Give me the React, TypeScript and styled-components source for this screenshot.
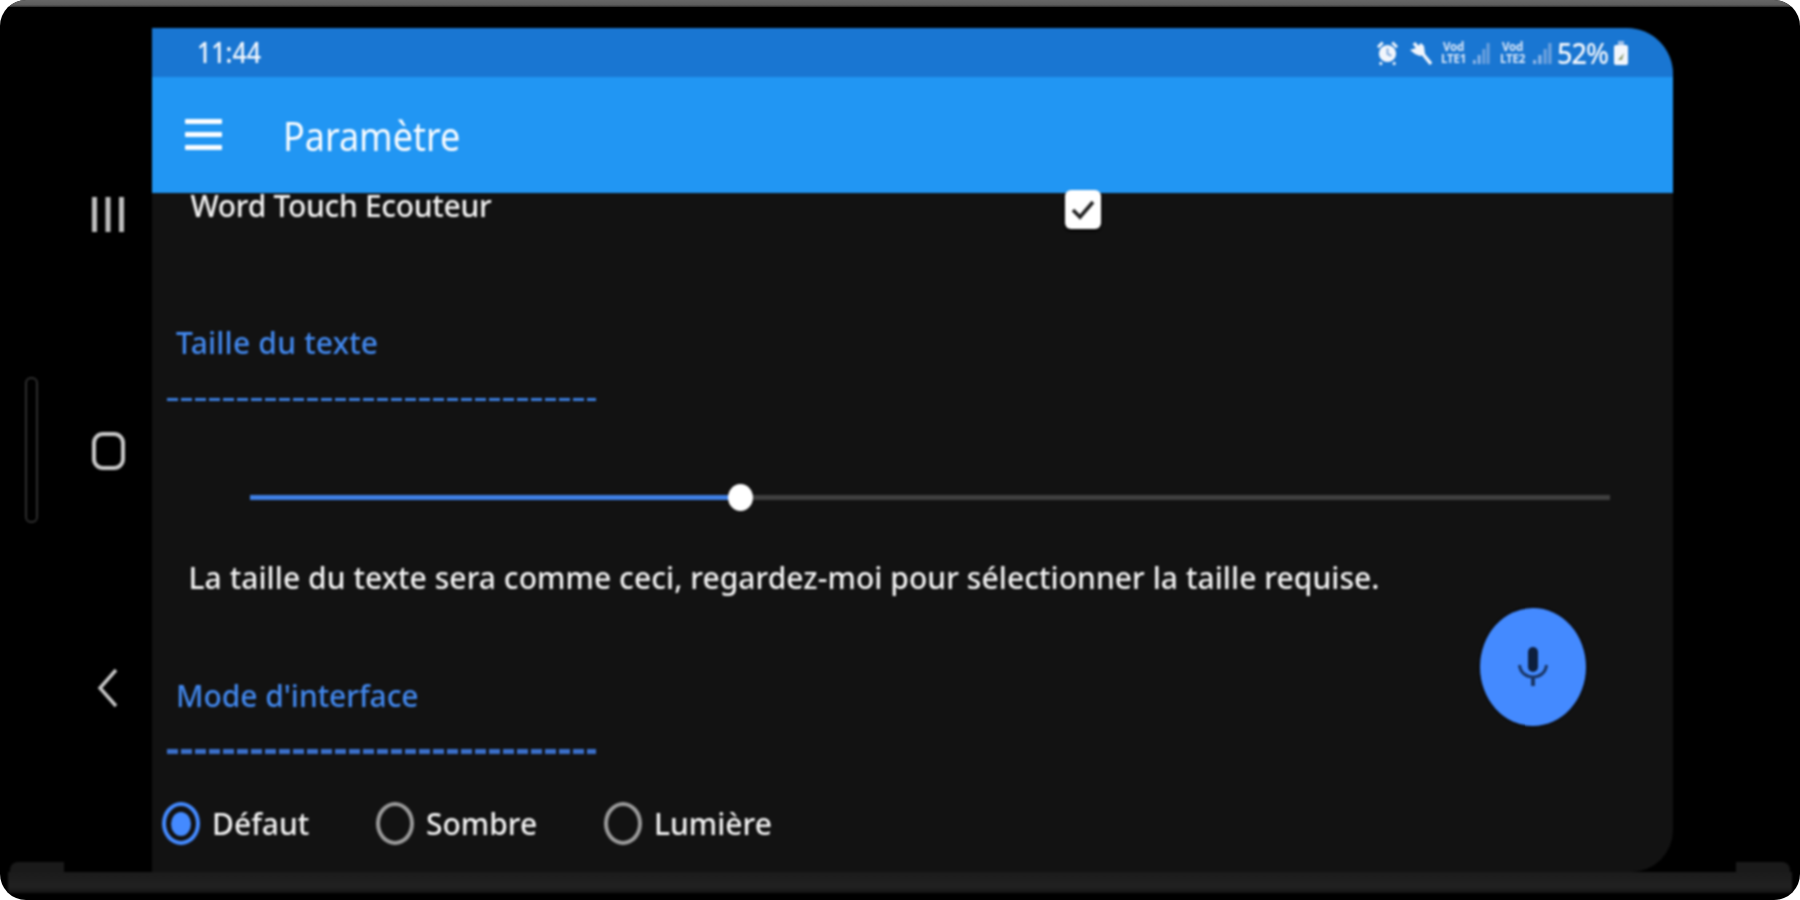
import React from "react";
import styled, { createGlobalStyle } from "styled-components";

const Global = createGlobalStyle`
  html, body { margin: 0; padding: 0; background: #fff; }
  body { width: 1800px; height: 900px; overflow: hidden; font-family: "Noto Sans", "Open Sans", sans-serif; }
`;

const Phone = styled.div`
  position: relative;
  width: 1800px;
  height: 900px;
  background: #000;
  border-radius: 26px;
  overflow: hidden;
  display: flex;
  flex-direction: column;
`;

const Inner = styled.div`
  flex: none;
  display: flex;
  flex-direction: column;
  height: 893px;
  filter: blur(0.8px);
`;

const TopEdge = styled.div`
  height: 7px;
  flex: none;
  background: linear-gradient(180deg, #666 0, #5c5c5c 70%, #2a2a2a 100%);
`;

const Main = styled.div`
  display: flex;
  height: 865px;
  flex: none;
  padding-top: 21px;
  box-sizing: border-box;
`;

const Rail = styled.nav`
  width: 151.5px;
  flex: none;
  box-sizing: border-box;
  padding: 169px 0 0 92px;
  display: flex;
  flex-direction: column;
  color: #bdbdbd;
`;

const RecentIcon = styled.svg`
  display: block;
  width: 32px;
  height: 35px;
`;

const HomeIcon = styled.div`
  width: 33px;
  height: 38px;
  margin-top: 200px;
  box-sizing: border-box;
  border: 4px solid #c8c8c8;
  border-radius: 11px;
`;

const BackIcon = styled.svg`
  display: block;
  width: 22px;
  height: 40px;
  margin: 198px 0 0 5px;
`;

const SideKey = styled.div`
  position: absolute;
  left: 25px;
  top: 370px;
  width: 13px;
  height: 146px;
  box-sizing: border-box;
  border: 2px solid #2e2e2e;
  border-radius: 6px;
`;

const Screen = styled.div`
  position: relative;
  width: 1521.5px;
  height: 844px;
  flex: none;
  background: #121212;
  border-radius: 0 46px 42px 0;
  overflow: hidden;
  display: flex;
  flex-direction: column;
`;

const StatusBar = styled.div`
  height: 49px;
  flex: none;
  background: #1976d2;
  display: flex;
  align-items: center;
  justify-content: space-between;
  padding: 0 44px 0 45.5px;
  color: #f4f8fd;
`;

const Clock = styled.span`
  display: inline-block;
  font-size: 25px;
  font-weight: 500;
  line-height: 30px;
  letter-spacing: 0;
  transform: translateY(-1px) scaleY(1.14);
`;

const StatusIcons = styled.div`
  display: flex;
  align-items: center;
`;

const Glyph = styled.svg<{ $w: number; $gap: number }>`
  display: block;
  width: ${(p) => p.$w}px;
  height: 26px;
  margin-left: ${(p) => p.$gap}px;
  flex: none;
`;

const Carrier = styled.div<{ $gap: number; $w: number }>`
  width: ${(p) => p.$w}px;
  margin-left: ${(p) => p.$gap}px;
  display: flex;
  flex-direction: column;
  align-items: center;
  color: #dbe7f8;
  font-weight: 700;
  line-height: 12px;
  font-size: 11.5px;
  letter-spacing: -0.2px;
  flex: none;
`;

const Battery = styled.span`
  display: inline-block;
  width: 53px;
  margin-left: 5px;
  font-size: 27px;
  font-weight: 500;
  line-height: 30px;
  letter-spacing: -0.9px;
  white-space: nowrap;
  transform: scaleY(1.08);
`;

const Toolbar = styled.header`
  height: 116px;
  flex: none;
  background: #2196f3;
  display: flex;
  align-items: center;
  padding-left: 33.5px;
  color: #fafdff;
`;

const MenuIcon = styled.div`
  width: 37px;
  height: 31px;
  flex: none;
  margin-top: -1px;
  display: flex;
  flex-direction: column;
  justify-content: space-between;
`;

const MenuBar = styled.span`
  display: block;
  height: 5px;
  background: #fafdff;
  border-radius: 1px;
`;

const Title = styled.h1`
  margin: 4px 0 0 61px;
  font-size: 36px;
  line-height: 40px;
  font-weight: 400;
  letter-spacing: -0.05px;
  transform: scaleY(1.1);
  transform-origin: left center;
`;

const Body = styled.main`
  display: flex;
  flex-direction: column;
  flex: 1;
`;

const WordRow = styled.div`
  height: 39px;
  margin-top: -3px;
  padding-left: 39px;
  display: flex;
  align-items: flex-start;
  position: relative;
`;

const WordLabel = styled.span`
  width: 874.5px;
  flex: none;
  margin-top: -2px;
  font-size: 30px;
  font-weight: 500;
  line-height: 36px;
  color: #f3f3f3;
  letter-spacing: -0.3px;
  white-space: nowrap;
`;

const Check = styled.div`
  width: 36px;
  height: 39px;
  flex: none;
  background: #fff;
  border-radius: 6px;
  display: flex;
  align-items: center;
  justify-content: center;
  box-shadow: 0 2px 3px #000;
`;

const SectionTitle = styled.h2<{ $top: number; $spacing: number }>`
  margin: ${(p) => p.$top}px 0 0 24.5px;
  font-size: 30px;
  line-height: 36px;
  font-weight: 500;
  color: #4288ee;
  letter-spacing: ${(p) => p.$spacing}px;
  white-space: nowrap;
`;

const DashRule = styled.div<{ $thick: number; $top: number; $color: string }>`
  margin: ${(p) => p.$top}px 0 0 15.5px;
  width: 429px;
  height: ${(p) => p.$thick}px;
  background: repeating-linear-gradient(90deg, ${(p) => p.$color} 0 11px, transparent 11px 14px);
`;

const SliderTrack = styled.div`
  position: relative;
  margin: 94px 0 0 98.5px;
  width: 1360px;
  height: 5px;
  background: #3f3f3f;
`;

const SliderFill = styled.div`
  height: 100%;
  background: #3f7fe4;
`;

const SliderThumb = styled.div`
  position: absolute;
  top: 50%;
  width: 25px;
  height: 27px;
  margin: -13.5px 0 0 -12.5px;
  background: #fff;
  border-radius: 50%;
`;

const Paragraph = styled.p`
  margin: 60px 0 0 37px;
  font-size: 30px;
  font-weight: 500;
  line-height: 36px;
  color: #f3f3f3;
  letter-spacing: 0.06px;
  white-space: nowrap;
`;

const RadioRow = styled.div`
  display: flex;
  align-items: center;
  margin: 48px 0 0 10.5px;
`;

const RadioItem = styled.label<{ $width: number }>`
  width: ${(p) => p.$width}px;
  flex: none;
  display: flex;
  align-items: center;
`;

const RadioDot = styled.span<{ $on?: boolean }>`
  display: flex;
  align-items: center;
  justify-content: center;
  box-sizing: border-box;
  width: 38px;
  height: 43px;
  flex: none;
  border-radius: 50%;
  border: 4px solid ${(p) => (p.$on ? "#448aff" : "#9a9a9a")};
  &::after {
    content: "";
    display: ${(p) => (p.$on ? "block" : "none")};
    width: 20px;
    height: 24px;
    border-radius: 50%;
    background: #448aff;
  }
`;

const RadioText = styled.span`
  margin-left: 12px;
  font-size: 30px;
  font-weight: 500;
  line-height: 36px;
  color: #f3f3f3;
  letter-spacing: 0;
  white-space: nowrap;
`;

const Fab = styled.button`
  position: absolute;
  right: 87px;
  bottom: 146px;
  width: 106px;
  height: 118px;
  padding: 0;
  border: none;
  border-radius: 50%;
  background: #448aff;
  box-shadow: 0 0 3px #000;
  display: flex;
  align-items: center;
  justify-content: center;
`;

const MicIcon = styled.svg`
  display: block;
  width: 30px;
  height: 40px;
`;

const Gutter = styled.div`
  flex: 1;
`;

const Bottom = styled.footer`
  position: relative;
  flex: none;
  height: 21px;
  margin: 0 8px;
  background: linear-gradient(180deg, #1b1b1b 0, #212121 70%, #141414 100%);
  &::before,
  &::after {
    content: "";
    position: absolute;
    bottom: 100%;
    width: 54px;
    height: 10px;
    background: #1a1a1a;
  }
  &::before {
    left: 2px;
    border-radius: 8px 0 0 0;
  }
  &::after {
    right: 2px;
    border-radius: 0 8px 0 0;
  }
`;

const Signal = ({ gap, w }: { gap: number; w: number }) => (
  <Glyph $w={w} $gap={gap} viewBox="0 0 19 26" preserveAspectRatio="none" aria-hidden="true">
    <rect x="1" y="20" width="3" height="4" fill="#8fb6e6" />
    <rect x="6" y="15" width="3" height="9" fill="#8fb6e6" />
    <rect x="11" y="9" width="3" height="15" fill="#6fa2dd" />
    <rect x="15.5" y="3" width="3" height="21" fill="#6fa2dd" />
  </Glyph>
);

export default function App() {
  return (
    <>
      <Global />
      <Phone>
        <TopEdge />
        <Inner>
          <SideKey />
          <Main>
            <Rail>
              <RecentIcon viewBox="0 0 32 35" aria-hidden="true">
                <rect x="0" y="0" width="5" height="35" fill="#bdbdbd" />
                <rect x="13.5" y="0" width="5" height="35" fill="#bdbdbd" />
                <rect x="27" y="0" width="5" height="35" fill="#bdbdbd" />
              </RecentIcon>
              <HomeIcon />
              <BackIcon viewBox="0 0 22 40" aria-hidden="true">
                <path d="M19 2 L3 20 L19 38" fill="none" stroke="#c8c8c8" strokeWidth="3.4" />
              </BackIcon>
            </Rail>
            <Screen>
              <StatusBar>
                <Clock>11:44</Clock>
                <StatusIcons>
                  <Glyph $w={21} $gap={0} viewBox="0 0 22 26" aria-hidden="true">
                    <circle cx="11" cy="13.5" r="9" fill="#f2f6fc" />
                    <path d="M1 7 L6 2 M21 7 L16 2 M5 23 L3 25 M17 23 L19 25" stroke="#f2f6fc" strokeWidth="3" />
                    <path d="M11 8 V14 L15 16" fill="none" stroke="#7fa9dc" strokeWidth="2" />
                  </Glyph>
                  <Glyph $w={24} $gap={10} viewBox="0 0 24 26" aria-hidden="true">
                    <path d="M2 10 L8 8 L13 3 L16 6 L17 14 L12 16 L7 14 Z" fill="#f2f6fc" />
                    <path d="M6 3 L23 24" stroke="#f2f6fc" strokeWidth="3.5" />
                  </Glyph>
                  <Carrier $gap={8} $w={27}>
                    <span>Vod</span>
                    <span>LTE1</span>
                  </Carrier>
                  <Signal gap={5} w={18} />
                  <Carrier $gap={8} $w={29}>
                    <span>Vod</span>
                    <span>LTE2</span>
                  </Carrier>
                  <Signal gap={5} w={20} />
                  <Battery>52%</Battery>
                  <Glyph $w={16} $gap={3} viewBox="0 0 16 26" aria-hidden="true">
                    <path d="M5 1 H11 V5 H5 Z" fill="#9fc0e8" />
                    <rect x="1" y="5" width="14" height="20" rx="2" fill="#f2f6fc" />
                    <path d="M5 20 L11 13 L9 20 Z" fill="#8a9a70" />
                  </Glyph>
                </StatusIcons>
              </StatusBar>
              <Toolbar>
                <MenuIcon>
                  <MenuBar />
                  <MenuBar />
                  <MenuBar />
                </MenuIcon>
                <Title>Paramètre</Title>
              </Toolbar>
              <Body>
                <WordRow>
                  <WordLabel>Word Touch Ecouteur</WordLabel>
                  <Check>
                    <svg width="26" height="22" viewBox="0 0 26 22" aria-hidden="true">
                      <path d="M3 11 L10 18 L23 3" fill="none" stroke="#222" strokeWidth="3.6" />
                    </svg>
                  </Check>
                </WordRow>
                <SectionTitle $top={96} $spacing={0.2}>Taille du texte</SectionTitle>
                <DashRule $thick={3} $top={37} $color="#3b7ddc" />
                <SliderTrack>
                  <SliderFill style={{ width: `${(490 / 1360) * 100}%` }} />
                  <SliderThumb style={{ left: `${(490 / 1360) * 100}%` }} />
                </SliderTrack>
                <Paragraph>La taille du texte sera comme ceci, regardez-moi pour sélectionner la taille requise.</Paragraph>
                <SectionTitle $top={82} $spacing={-0.05}>Mode d'interface</SectionTitle>
                <DashRule $thick={5} $top={35} $color="#3a6fc9" />
                <RadioRow>
                  <RadioItem $width={214}>
                    <RadioDot $on />
                    <RadioText>Défaut</RadioText>
                  </RadioItem>
                  <RadioItem $width={228}>
                    <RadioDot />
                    <RadioText>Sombre</RadioText>
                  </RadioItem>
                  <RadioItem $width={200}>
                    <RadioDot />
                    <RadioText>Lumière</RadioText>
                  </RadioItem>
                </RadioRow>
              </Body>
              <Fab aria-label="Micro">
                <MicIcon viewBox="0 0 30 40" aria-hidden="true">
                  <rect x="10" y="0" width="10" height="25" rx="5" fill="#0d1f3d" />
                  <path d="M1.5 18 C3 34 27 34 28.5 18" fill="none" stroke="#1a3666" strokeWidth="3" />
                  <path d="M15 31 V39" stroke="#1a3666" strokeWidth="4" />
                </MicIcon>
              </Fab>
            </Screen>
            <Gutter />
          </Main>
          <Bottom />
        </Inner>
      </Phone>
    </>
  );
}
